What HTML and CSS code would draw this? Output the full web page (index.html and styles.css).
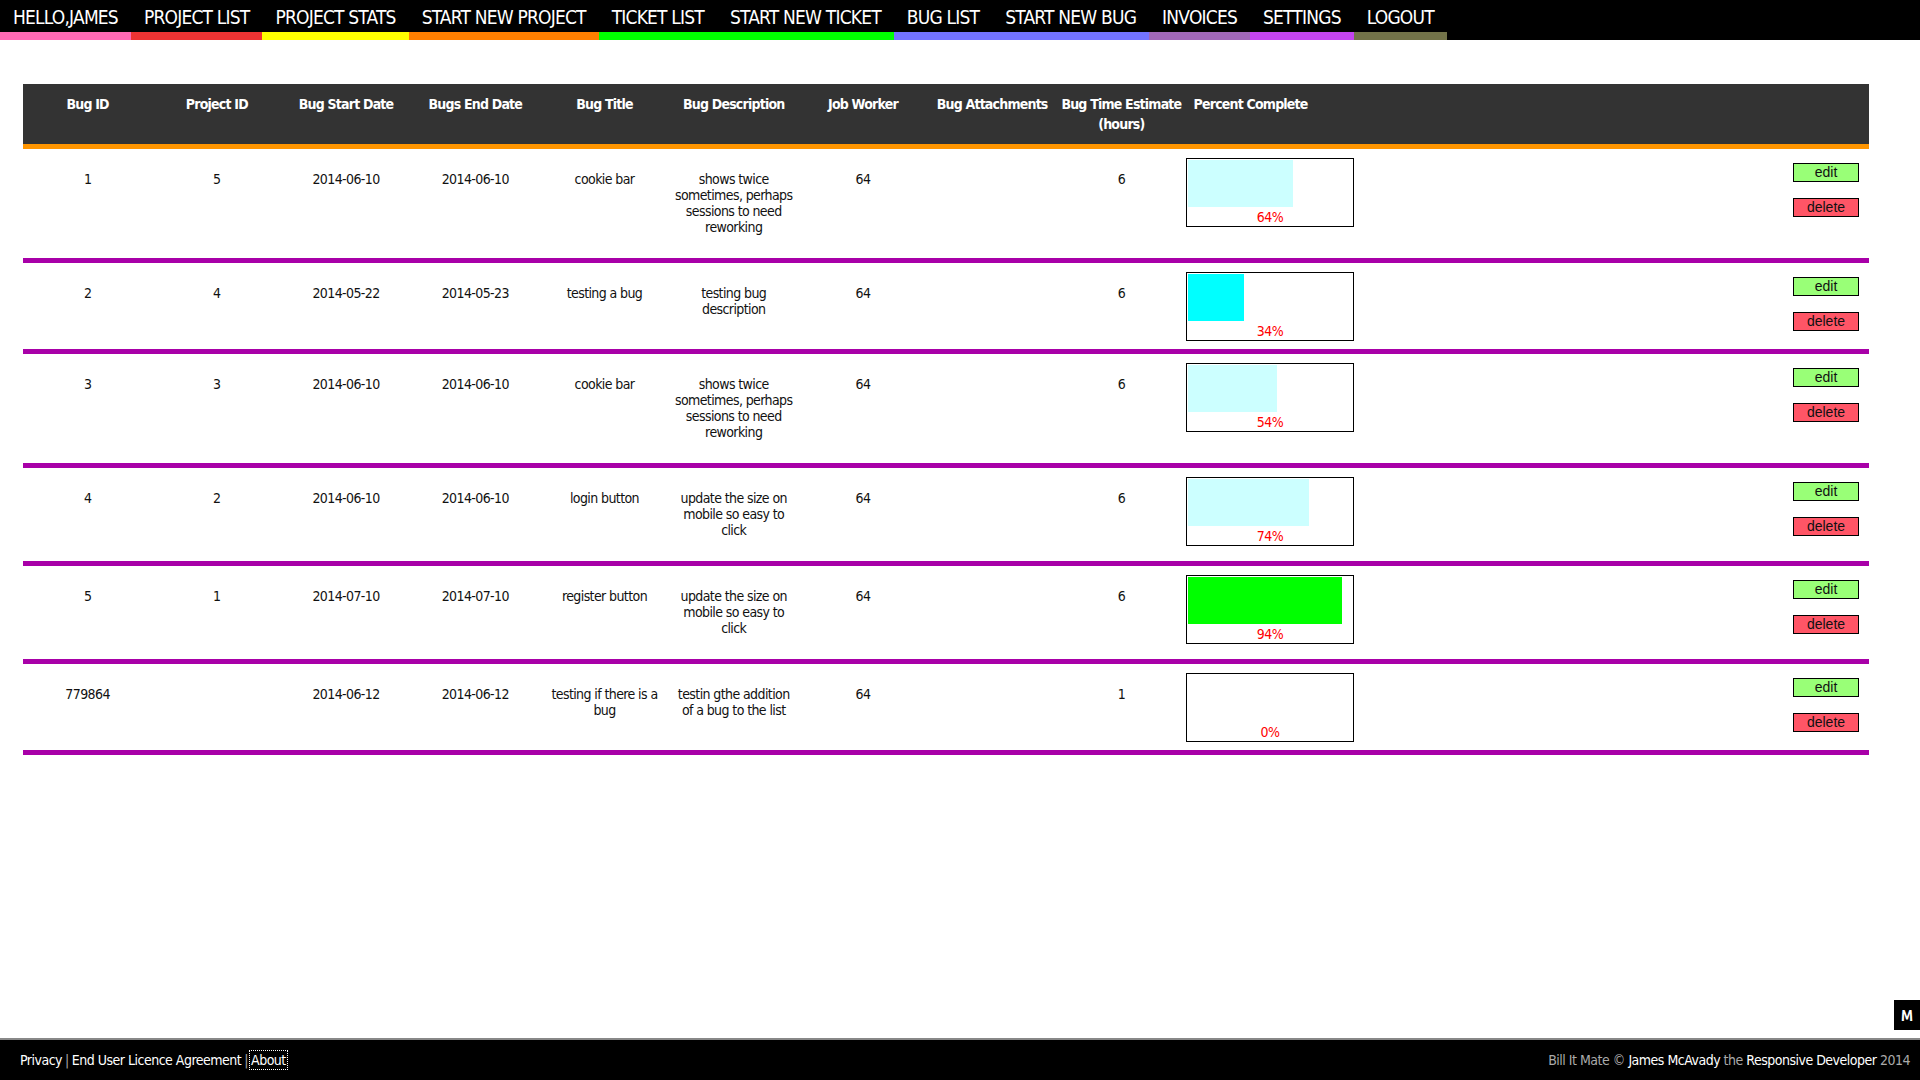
FILE: index.html
```html
<!DOCTYPE html>
<html lang="en">
<head>
<meta charset="utf-8">
<title>Bug List</title>
<link rel="stylesheet" href="styles.css">
</head>
<body>
<nav class="topnav">
  <a class="nav-item c-pink" href="#">HELLO,JAMES</a>
  <a class="nav-item c-red" href="#">PROJECT LIST</a>
  <a class="nav-item c-yellow" href="#">PROJECT STATS</a>
  <a class="nav-item c-orange" href="#">START NEW PROJECT</a>
  <a class="nav-item c-green" href="#">TICKET LIST</a>
  <a class="nav-item c-green" href="#">START NEW TICKET</a>
  <a class="nav-item c-blue" href="#">BUG LIST</a>
  <a class="nav-item c-blue" href="#">START NEW BUG</a>
  <a class="nav-item c-purple" href="#">INVOICES</a>
  <a class="nav-item c-magenta" href="#">SETTINGS</a>
  <a class="nav-item c-olive" href="#">LOGOUT</a>
</nav>

<main class="content">
  <table class="bugs">
    <thead>
      <tr>
        <th class="col">Bug ID</th>
        <th class="col">Project ID</th>
        <th class="col">Bug Start Date</th>
        <th class="col">Bugs End Date</th>
        <th class="col">Bug Title</th>
        <th class="col">Bug Description</th>
        <th class="col">Job Worker</th>
        <th class="col">Bug Attachments</th>
        <th class="col">Bug Time Estimate<br>(hours)</th>
        <th class="col">Percent Complete</th>
        <th class="col-actions"></th>
      </tr>
    </thead>
    <tbody>
      <tr>
        <td>1</td><td>5</td><td>2014-06-10</td><td>2014-06-10</td><td>cookie bar</td>
        <td>shows twice<br>sometimes, perhaps<br>sessions to need<br>reworking</td>
        <td>64</td><td></td><td>6</td>
        <td class="pc"><div class="progress"><div class="fill light" style="width:64%"></div><div class="pct">64%</div></div></td>
        <td class="actions"><button class="btn edit">edit</button><button class="btn delete">delete</button></td>
      </tr>
      <tr>
        <td>2</td><td>4</td><td>2014-05-22</td><td>2014-05-23</td><td>testing a bug</td>
        <td>testing bug<br>description</td>
        <td>64</td><td></td><td>6</td>
        <td class="pc"><div class="progress"><div class="fill cyan" style="width:34%"></div><div class="pct">34%</div></div></td>
        <td class="actions"><button class="btn edit">edit</button><button class="btn delete">delete</button></td>
      </tr>
      <tr>
        <td>3</td><td>3</td><td>2014-06-10</td><td>2014-06-10</td><td>cookie bar</td>
        <td>shows twice<br>sometimes, perhaps<br>sessions to need<br>reworking</td>
        <td>64</td><td></td><td>6</td>
        <td class="pc"><div class="progress"><div class="fill light" style="width:54%"></div><div class="pct">54%</div></div></td>
        <td class="actions"><button class="btn edit">edit</button><button class="btn delete">delete</button></td>
      </tr>
      <tr>
        <td>4</td><td>2</td><td>2014-06-10</td><td>2014-06-10</td><td>login button</td>
        <td>update the size on<br>mobile so easy to<br>click</td>
        <td>64</td><td></td><td>6</td>
        <td class="pc"><div class="progress"><div class="fill light" style="width:74%"></div><div class="pct">74%</div></div></td>
        <td class="actions"><button class="btn edit">edit</button><button class="btn delete">delete</button></td>
      </tr>
      <tr>
        <td>5</td><td>1</td><td>2014-07-10</td><td>2014-07-10</td><td>register button</td>
        <td>update the size on<br>mobile so easy to<br>click</td>
        <td>64</td><td></td><td>6</td>
        <td class="pc"><div class="progress"><div class="fill green" style="width:94%"></div><div class="pct">94%</div></div></td>
        <td class="actions"><button class="btn edit">edit</button><button class="btn delete">delete</button></td>
      </tr>
      <tr>
        <td>779864</td><td></td><td>2014-06-12</td><td>2014-06-12</td><td>testing if there is a<br>bug</td>
        <td>testin gthe addition<br>of a bug to the list</td>
        <td>64</td><td></td><td>1</td>
        <td class="pc"><div class="progress"><div class="fill" style="width:0%"></div><div class="pct">0%</div></div></td>
        <td class="actions"><button class="btn edit">edit</button><button class="btn delete">delete</button></td>
      </tr>
    </tbody>
  </table>
</main>

<a class="m-tab" href="#">M</a>

<footer class="footer">
  <div class="footer-links">
    <a href="#">Privacy</a><span class="sep">|</span><a href="#">End User Licence Agreement</a><span class="sep">|</span><a class="focused" href="#">About</a>
  </div>
  <div class="credit">
    Bill It Mate &copy; <span class="hl">James McAvady</span> the <span class="hl">Responsive Developer</span> 2014
  </div>
</footer>
</body>
</html>
```

FILE: styles.css
```css
html, body {
  margin: 0;
  padding: 0;
}

body {
  background: #ffffff;
  font-family: "Ubuntu Condensed", "Liberation Sans Narrow", "DejaVu Sans Condensed", "Roboto Condensed", "Liberation Sans", sans-serif;
  font-stretch: condensed;
  color: #111;
  min-height: 100vh;
  display: flex;
  flex-direction: column;
}

/* ---------- top navigation ---------- */
.topnav {
  display: flex;
  background: #000;
  height: 40px;
}

.nav-item {
  display: block;
  height: 32px;
  line-height: 34px;
  padding: 0 13px;
  color: #fff;
  font-size: 19px;
  letter-spacing: -0.8px;
  text-decoration: none;
  border-bottom: 8px solid transparent;
  white-space: nowrap;
}

.c-pink { border-bottom-color: #ff69b4; }
.c-red { border-bottom-color: #ee3333; }
.c-yellow { border-bottom-color: #ffff00; }
.c-orange { border-bottom-color: #ff7f00; }
.c-green { border-bottom-color: #00ff00; }
.c-blue { border-bottom-color: #7373ff; }
.c-purple { border-bottom-color: #a067b8; }
.c-magenta { border-bottom-color: #c444f0; }
.c-olive { border-bottom-color: #737349; }

/* ---------- table ---------- */
.content {
  padding: 44px 51px 0 23px;
}

.bugs {
  width: 100%;
  table-layout: fixed;
  border-collapse: collapse;
  font-size: 14px;
  line-height: 16px;
  letter-spacing: -0.6px;
}

.bugs th {
  background: #333333;
  color: #fff;
  font-size: 14px;
  font-weight: bold;
  letter-spacing: -0.8px;
  line-height: 20px;
  padding: 10px 0;
  vertical-align: top;
  text-align: center;
  white-space: nowrap;
}

.bugs thead tr {
  border-bottom: 5px solid #ff9500;
}

.col { width: 7%; }
.col-actions { width: 30%; }

.bugs tbody tr {
  border-bottom: 5px solid #a800a8;
}

.bugs td {
  padding: 22px 0 23px;
  vertical-align: top;
  text-align: center;
  color: #111;
}

.bugs td.pc {
  padding: 9px 0 8px;
  text-align: left;
}

.progress {
  width: 164px;
  height: 65px;
  border: 1px solid #000;
  padding: 1px;
  display: flex;
  flex-direction: column;
}

.fill {
  height: 47px;
}

.fill.light { background: #ccffff; }
.fill.cyan { background: #00ffff; }
.fill.green { background: #00ff00; }

.pct {
  height: 18px;
  line-height: 20px;
  text-align: center;
  color: #ff0000;
  font-size: 14px;
}

.bugs td.actions {
  padding: 14px 10px 0 0;
}

.actions {
  display: flex;
  flex-direction: column;
  align-items: flex-end;
}

.btn {
  display: block;
  width: 66px;
  height: 19px;
  margin: 0 0 16px auto;
  padding: 0;
  border: 1px solid #000;
  font-family: "Liberation Sans", Arial, sans-serif;
  font-size: 14px;
  letter-spacing: 0;
  line-height: 17px;
  color: #111;
}

.btn.edit { background: #99ff77; }
.btn.delete { background: #ff5566; }

/* ---------- floating tab ---------- */
.m-tab {
  position: fixed;
  right: 0;
  bottom: 50px;
  width: 26px;
  height: 30px;
  background: #000;
  color: #fff;
  font-family: "Ubuntu", "Liberation Sans", sans-serif;
  font-weight: bold;
  font-size: 17px;
  line-height: 30px;
  text-align: center;
  text-decoration: none;
}

/* ---------- footer ---------- */
.footer {
  margin-top: auto;
  height: 40px;
  background: #000;
  border-top: 2px solid #888;
  display: flex;
  align-items: center;
  justify-content: space-between;
  padding: 0 10px 0 20px;
  font-size: 14px;
  letter-spacing: -0.5px;
  color: #aaa;
}

.footer-links a {
  color: #fff;
  text-decoration: none;
}

.footer-links .sep {
  color: #aaa;
  margin: 0 3px;
}

.footer-links .focused {
  outline: 1px dotted #fff;
  outline-offset: 1px;
}

.credit {
  color: #aaa;
}

.credit .hl {
  color: #fff;
}
```
